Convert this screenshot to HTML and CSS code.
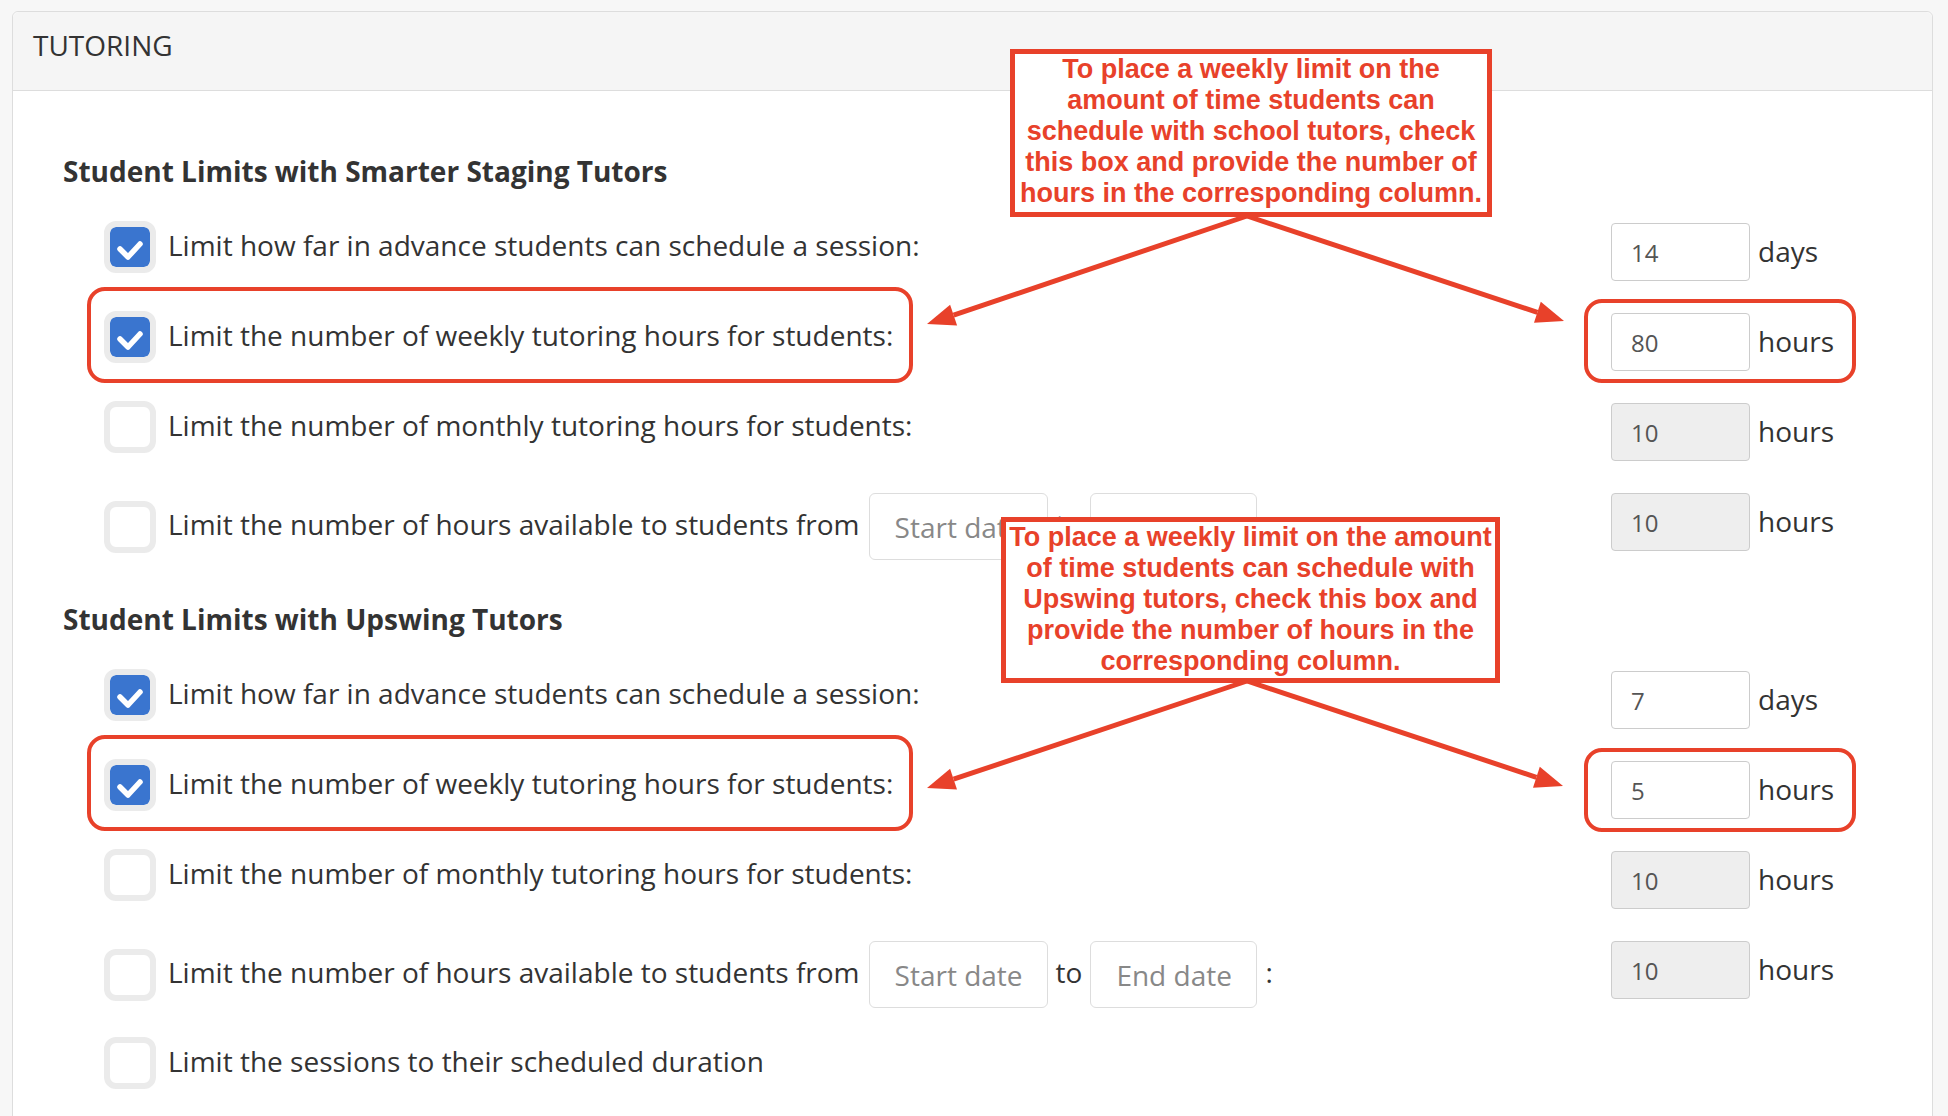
FILE: index.html
```html
<!DOCTYPE html>
<html lang="en">
<head>
<meta charset="utf-8">
<title>Tutoring settings</title>
<link rel="stylesheet" href="styles.css">
</head>
<body>
<div class="page">
  <section class="panel">
    <header class="panel-head">TUTORING</header>
    <div class="panel-body">
      <h3 class="group-title">Student Limits with Smarter Staging Tutors</h3>

      <div class="limit-row">
        <div class="limit-left">
          <span class="cb checked"><svg viewBox="0 0 40 40"><polyline points="10,22 18,30 30,17"/></svg></span>
          <span class="label">Limit how far in advance students can schedule a session:</span>
        </div>
        <div class="limit-right"><input class="num" type="text" value="14"><span class="unit">days</span></div>
      </div>

      <div class="limit-row">
        <div class="limit-left">
          <span class="cb checked"><svg viewBox="0 0 40 40"><polyline points="10,22 18,30 30,17"/></svg></span>
          <span class="label">Limit the number of weekly tutoring hours for students:</span>
        </div>
        <div class="limit-right"><input class="num" type="text" value="80"><span class="unit">hours</span></div>
      </div>

      <div class="limit-row">
        <div class="limit-left">
          <span class="cb"></span>
          <span class="label">Limit the number of monthly tutoring hours for students:</span>
        </div>
        <div class="limit-right"><input class="num" type="text" value="10" disabled><span class="unit">hours</span></div>
      </div>

      <div class="limit-row dated">
        <div class="limit-left">
          <span class="cb"></span>
          <span class="label">Limit the number of hours available to students from</span>
          <input class="date date-start" type="text" placeholder="Start date">
          <span class="label">to</span>
          <input class="date date-end" type="text" placeholder="End date">
          <span class="label">:</span>
        </div>
        <div class="limit-right"><input class="num" type="text" value="10" disabled><span class="unit">hours</span></div>
      </div>

      <h3 class="group-title">Student Limits with Upswing Tutors</h3>

      <div class="limit-row">
        <div class="limit-left">
          <span class="cb checked"><svg viewBox="0 0 40 40"><polyline points="10,22 18,30 30,17"/></svg></span>
          <span class="label">Limit how far in advance students can schedule a session:</span>
        </div>
        <div class="limit-right"><input class="num" type="text" value="7"><span class="unit">days</span></div>
      </div>

      <div class="limit-row">
        <div class="limit-left">
          <span class="cb checked"><svg viewBox="0 0 40 40"><polyline points="10,22 18,30 30,17"/></svg></span>
          <span class="label">Limit the number of weekly tutoring hours for students:</span>
        </div>
        <div class="limit-right"><input class="num" type="text" value="5"><span class="unit">hours</span></div>
      </div>

      <div class="limit-row">
        <div class="limit-left">
          <span class="cb"></span>
          <span class="label">Limit the number of monthly tutoring hours for students:</span>
        </div>
        <div class="limit-right"><input class="num" type="text" value="10" disabled><span class="unit">hours</span></div>
      </div>

      <div class="limit-row dated">
        <div class="limit-left">
          <span class="cb"></span>
          <span class="label">Limit the number of hours available to students from</span>
          <input class="date date-start" type="text" placeholder="Start date">
          <span class="label">to</span>
          <input class="date date-end" type="text" placeholder="End date">
          <span class="label">:</span>
        </div>
        <div class="limit-right"><input class="num" type="text" value="10" disabled><span class="unit">hours</span></div>
      </div>

      <div class="limit-row last">
        <div class="limit-left">
          <span class="cb"></span>
          <span class="label">Limit the sessions to their scheduled duration</span>
        </div>
      </div>
    </div>
  </section>

  <div class="hl hl-left hl-top"></div>
  <div class="hl hl-right hl-right-top"></div>
  <div class="hl hl-left hl-bottom"></div>
  <div class="hl hl-right hl-right-bottom"></div>

  <svg class="arrows" width="1948" height="1116" viewBox="0 0 1948 1116">
    <g class="arrow-lines">
      <line x1="1247" y1="216" x2="953.6" y2="315.1"/>
      <line x1="1247" y1="216" x2="1537.4" y2="312.3"/>
      <line x1="1247" y1="681" x2="953.6" y2="779.2"/>
      <line x1="1247" y1="681" x2="1536.4" y2="777.3"/>
    </g>
    <g class="arrow-heads">
      <polygon points="927,324 957.1,325.5 950.1,304.7"/>
      <polygon points="1564,321 1534,322.7 1540.8,301.8"/>
      <polygon points="927,788 957,789.6 950.1,768.8"/>
      <polygon points="1563,786 1533,787.7 1539.8,766.8"/>
    </g>
  </svg>

  <div class="callout callout-top">To place a weekly limit on the<br>amount of time students can<br>schedule with school tutors, check<br>this box and provide the number of<br>hours in the corresponding column.</div>
  <div class="callout callout-bottom">To place a weekly limit on the amount<br>of time students can schedule with<br>Upswing tutors, check this box and<br>provide the number of hours in the<br>corresponding column.</div>
</div>
</body>
</html>
```

FILE: styles.css
```css
html, body {
  margin: 0;
  height: 100%;
  overflow: hidden;
  background: #f7f7f7;
  font-family: "Open Sans", "Noto Sans", sans-serif;
  color: #333;
}

.page {
  position: relative;
  height: 1116px;
  box-sizing: border-box;
  padding: 11px 15px 0 12px;
}

.panel {
  background: #fff;
  border: 1px solid #ddd;
  border-radius: 6px 6px 0 0;
  height: 1200px;
}

.panel-head {
  background: #f5f5f5;
  border-bottom: 1px solid #ddd;
  border-radius: 6px 6px 0 0;
  padding: 14px 20px 26px;
  font-size: 28px;
  line-height: 38px;
  color: #333;
}

.panel-body {
  padding: 30px 0 40px 50px;
}

.group-title {
  margin: 34px 0 15px;
  font-size: 28px;
  line-height: 32px;
  font-weight: 700;
  color: #333;
}

.limit-row {
  display: grid;
  grid-template-columns: 1fr 321px;
  align-items: start;
  padding: 19px 0 11px 41px;
}

.limit-row.dated {
  padding-top: 21px;
  padding-bottom: 9px;
}

.limit-row.last {
  padding-top: 20px;
}

.limit-left {
  display: flex;
  align-items: center;
  gap: 8px;
}

.limit-right {
  display: flex;
  align-items: center;
  gap: 8px;
  margin-top: 2px;
}

.dated .limit-right {
  margin-top: 0;
}

.cb {
  flex: none;
  width: 52px;
  height: 52px;
  box-sizing: border-box;
  border: 6px solid #ebebeb;
  border-radius: 12px;
  background: #fff;
  margin-right: 4px;
  display: flex;
}

.cb.checked {
  background: #3a75cf;
  background-clip: padding-box;
}

.cb svg {
  width: 40px;
  height: 40px;
}

.cb polyline {
  fill: none;
  stroke: #fff;
  stroke-width: 5.5;
  stroke-linecap: round;
  stroke-linejoin: round;
}

.label {
  font-size: 28px;
  line-height: 38px;
  color: #333;
  white-space: nowrap;
  margin-bottom: 5px;
}

.num {
  width: 139px;
  height: 58px;
  box-sizing: border-box;
  border: 1.5px solid #ccc;
  border-radius: 4px;
  padding: 0 19px;
  font-family: "Open Sans", sans-serif;
  font-size: 24px;
  color: #555;
  background: #fff;
  margin: 0;
  outline: none;
}

.num:disabled {
  background: #eee;
  color: #555;
  -webkit-text-fill-color: #555;
  opacity: 1;
}

.unit {
  font-size: 28px;
  line-height: 38px;
  color: #333;
  margin-bottom: 2px;
}

.date {
  height: 67px;
  box-sizing: border-box;
  border: 1.5px solid #ddd;
  border-radius: 6px;
  padding: 0 25px;
  font-family: "Open Sans", sans-serif;
  font-size: 28px;
  color: #555;
  background: #fff;
  margin: 0;
  outline: none;
}

.date::placeholder {
  color: #888;
}

.date-start {
  width: 179px;
  margin-left: 1px;
}

.date-end {
  width: 167px;
}

/* annotations */
.hl {
  position: absolute;
  box-sizing: border-box;
  border: 4.5px solid #e8412a;
  border-radius: 18px;
}

.hl-left {
  left: 87px;
  width: 826px;
  height: 96px;
}

.hl-top { top: 287px; }
.hl-bottom { top: 735px; }

.hl-right {
  left: 1584px;
  width: 272px;
  height: 84px;
}

.hl-right-top { top: 299px; }
.hl-right-bottom { top: 748px; }

.arrows {
  position: absolute;
  left: 0;
  top: 0;
  pointer-events: none;
}

.arrow-lines line {
  stroke: #e8412a;
  stroke-width: 5;
}

.arrow-heads polygon {
  fill: #e8412a;
}

.callout {
  position: absolute;
  box-sizing: border-box;
  background: #fff;
  border: 5px solid #e8412a;
  color: #e8412a;
  font-family: "Liberation Sans", Arial, sans-serif;
  font-weight: 700;
  font-size: 27px;
  line-height: 31px;
  text-align: center;
  white-space: nowrap;
}

.callout-top {
  left: 1010px;
  top: 49px;
  width: 482px;
  height: 168px;
}

.callout-bottom {
  left: 1001px;
  top: 517px;
  width: 499px;
  height: 166px;
}
```
